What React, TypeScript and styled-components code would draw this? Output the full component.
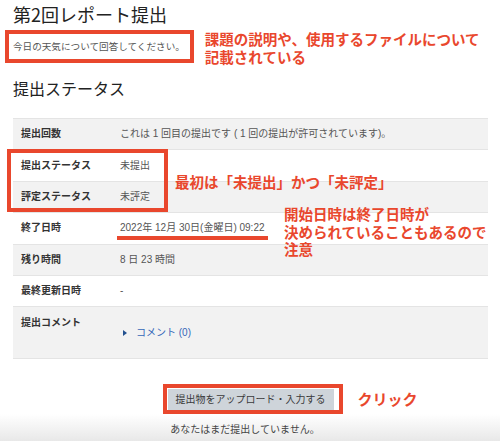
import React from 'react';
import styled, { createGlobalStyle } from 'styled-components';

const GlobalStyle = createGlobalStyle`
    html, body {
        margin: 0;
        padding: 0;
        background: #fff;
    }
    body {
        font-family: "Liberation Sans", "Noto Sans CJK JP", sans-serif;
        color: #333;
    }
`;

const RED = '#e9472d';

const S = {
    Wrapper: styled.div`
        width: 500px;
        height: 441px;
        overflow: hidden;
        display: flex;
        flex-direction: column;
    `,
    Page: styled.div`
        padding: 1px 12px 0 13px;
    `,
    Title: styled.h2`
        margin: 0;
        font-family: "Noto Sans CJK JP", sans-serif;
        font-size: 18px;
        font-weight: 400;
        line-height: 26px;
        color: #222;
    `,
    Intro: styled.div`
        display: flex;
        align-items: flex-start;
        gap: 11px;
        margin: 3px 0 0 -8px;
    `,
    Boxed: styled.div`
        border: 4px solid ${RED};
        padding: 0 5px 0 4px;
        font-size: 9.6px;
        line-height: 25px;
        color: #555;
        white-space: nowrap;
    `,
    Note: styled.div`
        font-family: "Noto Sans CJK JP", sans-serif;
        font-size: 14.5px;
        font-weight: 700;
        line-height: 17.5px;
        color: ${RED};
        white-space: nowrap;
    `,
    Heading: styled.h3`
        margin: 12px 0 0;
        font-family: "Noto Sans CJK JP", sans-serif;
        font-size: 16px;
        font-weight: 400;
        line-height: 22px;
        color: #222;
    `,
    Table: styled.div`
        margin-top: 19px;
        display: flex;
        flex-direction: column;
        border-bottom: 1px solid #e4e4e4;
    `,
    Group: styled.div`
        position: relative;
        display: flex;
        flex-direction: column;
    `,
    Row: styled.div<{ $shaded?: boolean; $tall?: boolean }>`
        position: relative;
        box-sizing: border-box;
        display: grid;
        grid-template-columns: 107px 1fr;
        align-items: center;
        height: ${(p) => (p.$tall ? '52px' : '31.4px')};
        border-top: 1px solid #e4e4e4;
        background: ${(p) => (p.$shaded ? '#f2f2f2' : '#fff')};
        font-size: 10px;
        line-height: 14px;
    `,
    Label: styled.div<{ $top?: boolean }>`
        padding-left: 8px;
        font-weight: 700;
        color: #333;
        align-self: ${(p) => (p.$top ? 'start' : 'center')};
        padding-top: ${(p) => (p.$top ? '9px' : '0')};
    `,
    Value: styled.div`
        color: #555;
        white-space: nowrap;
    `,
    Underlined: styled.span`
        position: relative;
        display: inline-block;

        &::after {
            content: '';
            position: absolute;
            left: -3px;
            right: -3px;
            top: calc(100% + 1px);
            height: 4px;
            background: ${RED};
        }
    `,
    Frame: styled.div`
        position: absolute;
        z-index: 1;
        box-sizing: border-box;
        top: 0;
        bottom: 0;
        left: -6px;
        width: 161px;
        border: 4px solid ${RED};
    `,
    Callout: styled.div<{ $left: number; $top: number }>`
        position: absolute;
        z-index: 2;
        left: ${(p) => p.$left}px;
        top: ${(p) => p.$top}px;
    `,
    Comment: styled.a`
        display: inline-flex;
        align-items: center;
        gap: 9px;
        margin-left: 3px;
        color: #3568b9;
        text-decoration: none;
    `,
    Caret: styled.span`
        width: 0;
        height: 0;
        border-top: 3px solid transparent;
        border-bottom: 3px solid transparent;
        border-left: 4px solid #22508f;
    `,
    Actions: styled.div`
        margin-top: 25px;
        display: grid;
        grid-template-columns: 1fr auto 1fr;
        align-items: center;
        padding-left: 4px;
    `,
    ButtonFrame: styled.div`
        grid-column: 2;
        border: 4px solid ${RED};
        padding: 1px 5px 0 1px;
    `,
    Button: styled.button`
        display: block;
        height: 21px;
        padding: 0 8px;
        border: none;
        border-radius: 0;
        background: #ced4da;
        color: #3a3a3a;
        font-family: "Liberation Sans", "Noto Sans CJK JP", sans-serif;
        font-size: 10px;
        line-height: 21px;
        cursor: pointer;
    `,
    Click: styled.div`
        padding-left: 15px;
        font-family: "Noto Sans CJK JP", sans-serif;
        font-size: 15px;
        font-weight: 700;
        line-height: 20px;
        color: ${RED};
    `,
    Footer: styled.div`
        flex: 1;
        padding-top: 9px;
        padding-right: 10px;
        text-align: center;
        font-size: 10px;
        line-height: 14px;
        color: #444;
        background: linear-gradient(#ffffff, #e8e8e8);
    `,
};

const App = () => {
    return (
        <S.Wrapper>
            <GlobalStyle />
            <S.Page>
                <S.Title>第2回レポート提出</S.Title>
                <S.Intro>
                    <S.Boxed>今日の天気について回答してください。</S.Boxed>
                    <S.Note>
                        課題の説明や、使用するファイルについて
                        <br />
                        記載されている
                    </S.Note>
                </S.Intro>

                <S.Heading>提出ステータス</S.Heading>

                <S.Table>
                    <S.Row $shaded>
                        <S.Label>提出回数</S.Label>
                        <S.Value>これは 1 回目の提出です ( 1 回の提出が許可されています)。</S.Value>
                    </S.Row>
                    <S.Group>
                        <S.Row>
                            <S.Label>提出ステータス</S.Label>
                            <S.Value>未提出</S.Value>
                        </S.Row>
                        <S.Row $shaded>
                            <S.Label>評定ステータス</S.Label>
                            <S.Value>未評定</S.Value>
                        </S.Row>
                        <S.Frame />
                        <S.Callout $left={162} $top={24}>
                            <S.Note>最初は「未提出」かつ「未評定」</S.Note>
                        </S.Callout>
                    </S.Group>
                    <S.Row>
                        <S.Label>終了日時</S.Label>
                        <S.Value>
                            <S.Underlined>2022年 12月 30日(金曜日) 09:22</S.Underlined>
                        </S.Value>
                        <S.Callout $left={271} $top={-8}>
                            <S.Note>
                                開始日時は終了日時が
                                <br />
                                決められていることもあるので
                                <br />
                                注意
                            </S.Note>
                        </S.Callout>
                    </S.Row>
                    <S.Row $shaded>
                        <S.Label>残り時間</S.Label>
                        <S.Value>8 日 23 時間</S.Value>
                    </S.Row>
                    <S.Row>
                        <S.Label>最終更新日時</S.Label>
                        <S.Value>-</S.Value>
                    </S.Row>
                    <S.Row $shaded $tall>
                        <S.Label $top>提出コメント</S.Label>
                        <S.Value>
                            <S.Comment href="#">
                                <S.Caret />
                                コメント (0)
                            </S.Comment>
                        </S.Value>
                    </S.Row>
                </S.Table>

                <S.Actions>
                    <S.ButtonFrame>
                        <S.Button>提出物をアップロード・入力する</S.Button>
                    </S.ButtonFrame>
                    <S.Click>クリック</S.Click>
                </S.Actions>
            </S.Page>
            <S.Footer>あなたはまだ提出していません。</S.Footer>
        </S.Wrapper>
    );
};

export default App;
